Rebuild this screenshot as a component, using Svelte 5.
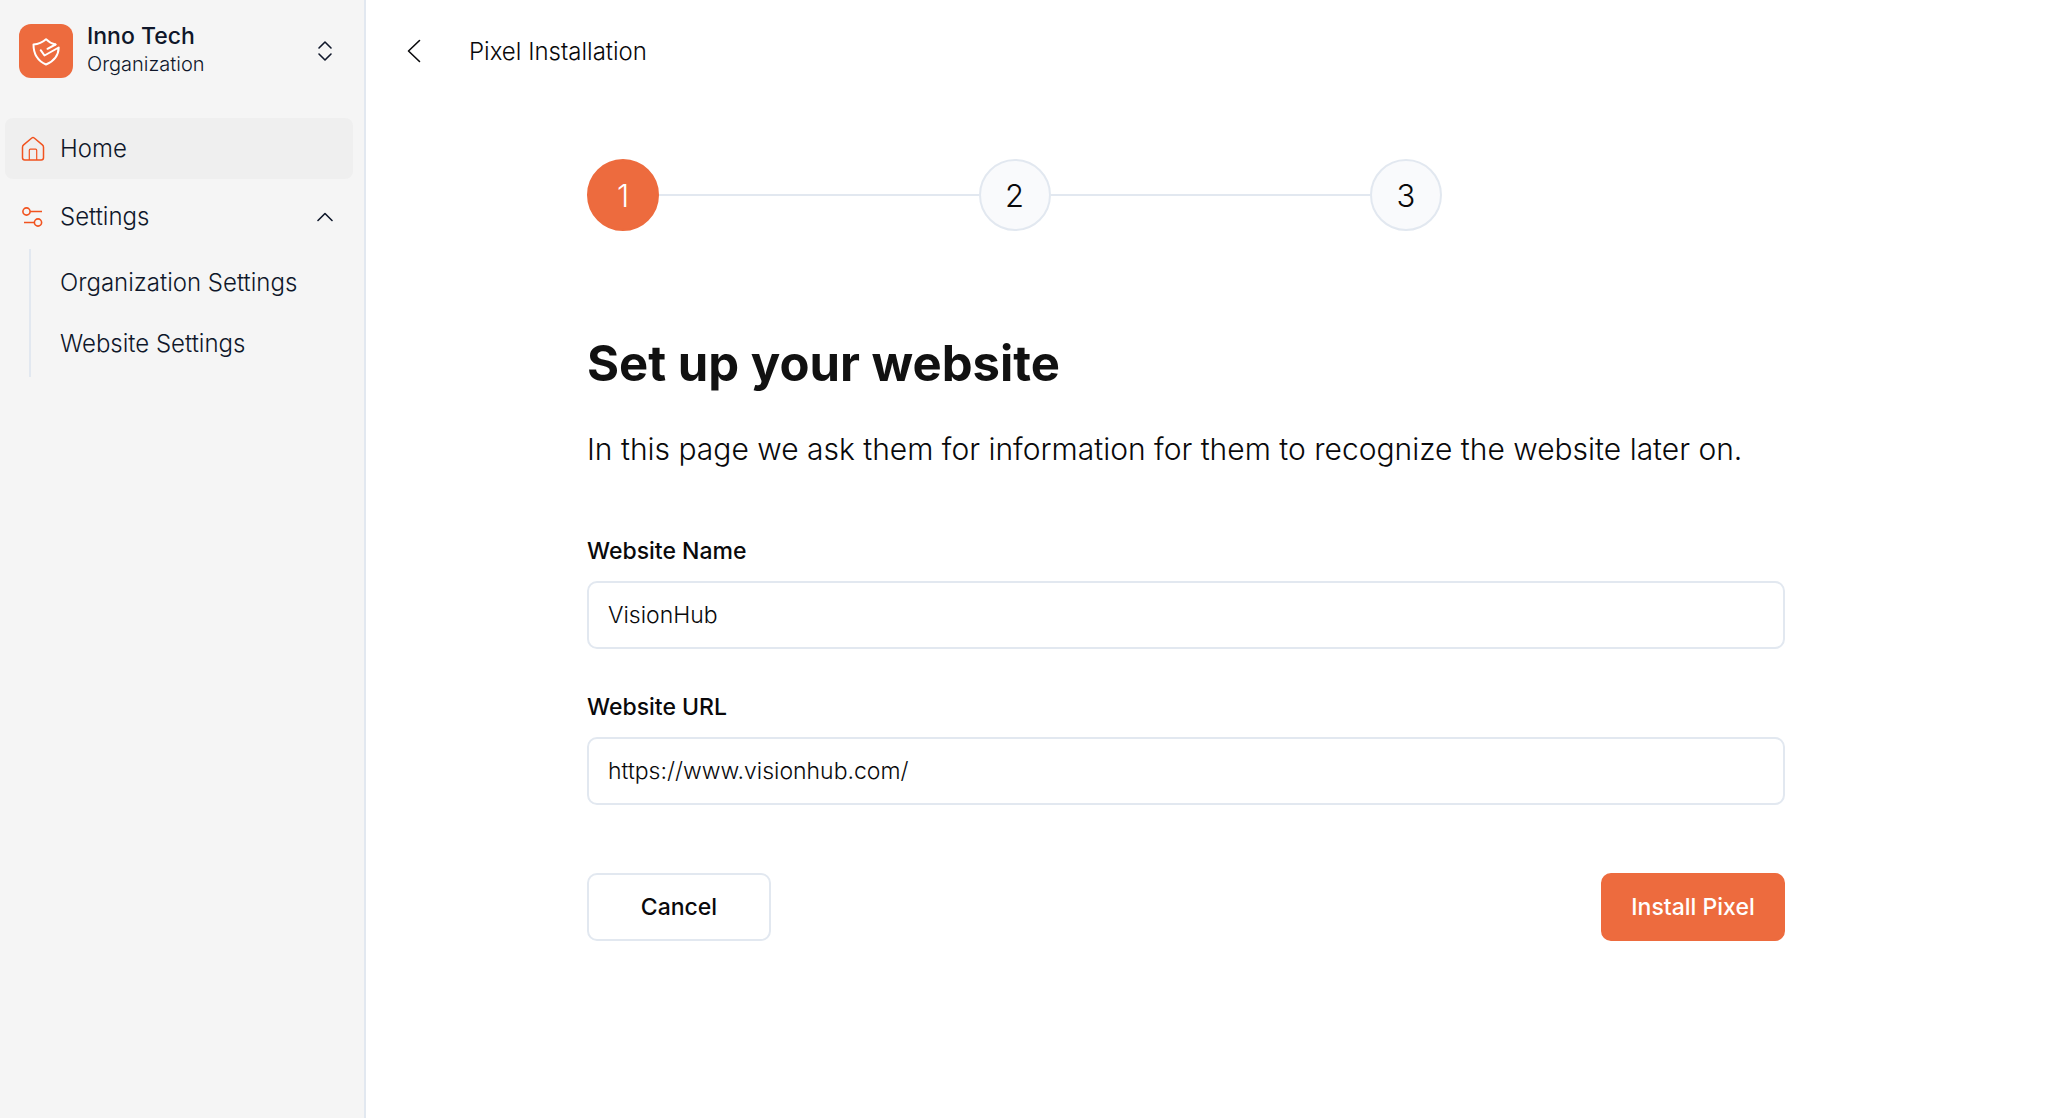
<script>
  let websiteName = 'VisionHub';
  let websiteUrl = 'https://www.visionhub.com/';
  let settingsOpen = true;
  let currentStep = 1;

  const steps = [1, 2, 3];

  const settingsLinks = [
    { label: 'Organization Settings', href: '#organization' },
    { label: 'Website Settings', href: '#website' }
  ];

  function toggleSettings() {
    settingsOpen = !settingsOpen;
  }

  function installPixel() {
    if (currentStep < steps.length) {
      currentStep += 1;
    }
  }

  function cancel() {
    currentStep = 1;
  }
</script>

<div class="layout">
  <aside class="sidebar">
    <button type="button" class="org">
      <span class="logo">
        <svg width="30" height="30" viewBox="0 0 30 30" fill="none" stroke="currentColor" stroke-width="2" stroke-linecap="round" stroke-linejoin="round">
          <path d="M24.5 8.5 C20.5 7.5 17.5 6 15 3.2 C11.8 6 7.5 8 2.5 8.5 C2.5 18 6 24.5 15 28.5 C23.5 25 27.5 19.5 27.7 11.5 L13.5 19.5 L9.7 14.2" />
          <path d="M24.5 8.5 L16.5 12.8" />
        </svg>
      </span>
      <span class="org-text">
        <span class="org-name">Inno Tech</span>
        <span class="org-type">Organization</span>
      </span>
      <svg class="end-icon" width="16" height="22" viewBox="0 0 16 22" fill="none" stroke="currentColor" stroke-width="1.6" stroke-linecap="round" stroke-linejoin="round">
        <path d="M2 8 L8 2 L14 8 M2 14 L8 20 L14 14" />
      </svg>
    </button>

    <nav class="nav">
      <a href="#home" class="nav-item active">
        <svg class="nav-icon" width="24" height="26" viewBox="0 0 24 26" fill="none" stroke="currentColor" stroke-width="1.5" stroke-linejoin="round">
          <path d="M1.5 11.2 Q1.5 9.8 2.6 8.9 L10.8 2 Q12 1.1 13.2 2 L21.4 8.9 Q22.5 9.8 22.5 11.2 V21.8 Q22.5 24 20.3 24 H3.7 Q1.5 24 1.5 21.8 Z" />
          <path d="M8.3 24 V14.2 Q8.3 13.2 9.3 13.2 H14.7 Q15.7 13.2 15.7 14.2 V24" stroke-width="1.2" />
        </svg>
        Home
      </a>

      <button type="button" class="nav-item" aria-expanded={settingsOpen} on:click={toggleSettings}>
        <svg class="nav-icon" width="24" height="22" viewBox="0 0 24 22" fill="none" stroke="currentColor" stroke-width="1.6">
          <circle cx="5.5" cy="5.5" r="3.6" />
          <path d="M9.1 5.5 H21 M3 16.5 H13.4" />
          <circle cx="17" cy="16.5" r="3.6" />
        </svg>
        Settings
        <svg class="end-icon" class:closed={!settingsOpen} width="16" height="10" viewBox="0 0 16 10" fill="none" stroke="currentColor" stroke-width="1.6" stroke-linecap="round" stroke-linejoin="round">
          <path d="M1 8.5 L8 1.5 L15 8.5" />
        </svg>
      </button>

      {#if settingsOpen}
        <div class="subnav">
          {#each settingsLinks as link}
            <a href={link.href}>{link.label}</a>
          {/each}
        </div>
      {/if}
    </nav>
  </aside>

  <main class="main">
    <header class="topbar">
      <button type="button" class="back" aria-label="Back">
        <svg width="14" height="24" viewBox="0 0 14 24" fill="none" stroke="currentColor" stroke-width="1.6" stroke-linecap="round" stroke-linejoin="round">
          <path d="M12.5 1.5 L1.5 12 L12.5 22.5" />
        </svg>
      </button>
      <span>Pixel Installation</span>
    </header>

    <div class="content">
      <div class="steps">
        {#each steps as step, i}
          {#if i > 0}
            <span class="line"></span>
          {/if}
          <span class="step" class:current={step === currentStep}>{step}</span>
        {/each}
      </div>

      <h1>Set up your website</h1>
      <p>In this page we ask them for information for them to recognize the website later on.</p>

      <form on:submit|preventDefault={installPixel}>
        <div class="form-group">
          <label for="websiteName">Website Name</label>
          <input type="text" id="websiteName" bind:value={websiteName} />
        </div>

        <div class="form-group">
          <label for="websiteUrl">Website URL</label>
          <input type="text" id="websiteUrl" bind:value={websiteUrl} />
        </div>

        <div class="button-group">
          <button type="button" class="btn" on:click={cancel}>Cancel</button>
          <button type="submit" class="btn primary">Install Pixel</button>
        </div>
      </form>
    </div>
  </main>
</div>

<style>
  :global(body) {
    background: #fff;
    font-family: Inter, 'Liberation Sans', sans-serif;
    font-size: 24px;
    font-weight: 300;
    color: #09090b;
  }

  * {
    box-sizing: border-box;
  }

  button,
  input {
    font: inherit;
    color: inherit;
  }

  button {
    border: 0;
    background: none;
    cursor: pointer;
  }

  a {
    color: inherit;
    text-decoration: none;
  }

  svg {
    flex: none;
  }

  .layout {
    display: flex;
    min-height: 100vh;
  }

  .sidebar {
    flex: none;
    width: 366px;
    background: #f5f5f5;
    border-right: 2px solid #e2e8f0;
    color: #0f172a;
  }

  .org {
    display: flex;
    align-items: center;
    width: 100%;
    height: 101px;
    padding: 0 31px 0 19px;
    text-align: left;
  }

  .logo {
    display: flex;
    align-items: center;
    justify-content: center;
    width: 54px;
    height: 54px;
    margin-right: 14px;
    border-radius: 12px;
    background: #ed6b3e;
    color: #fff;
  }

  .org-text {
    display: flex;
    flex-direction: column;
    padding-bottom: 2px;
  }

  .org-name {
    font-size: 23px;
    font-weight: 500;
    line-height: 28px;
  }

  .org-type {
    font-size: 20px;
    line-height: 28px;
  }

  .end-icon {
    margin-left: auto;
  }

  .end-icon.closed {
    transform: rotate(180deg);
  }

  .nav {
    padding: 17px 11px 0 5px;
  }

  .nav-item {
    display: flex;
    align-items: center;
    width: 100%;
    height: 61px;
    margin-bottom: 7px;
    padding: 0 20px 0 16px;
    border-radius: 8px;
  }

  .nav-item.active {
    background: #efefef;
  }

  .nav-icon {
    margin-right: 15px;
    color: #f1531f;
  }

  .subnav {
    margin: -5px 0 0 24px;
    padding: 3px 0;
    border-left: 2px solid #e2e8f0;
  }

  .subnav a {
    display: block;
    padding-left: 29px;
    line-height: 61px;
  }

  .main {
    flex: 1;
    min-width: 0;
  }

  .topbar {
    display: flex;
    align-items: center;
    height: 102px;
    padding-left: 41px;
  }

  .back {
    display: flex;
    margin-right: 48px;
    padding: 0;
  }

  .content {
    padding: 57px 269px 57px 221px;
  }

  .steps {
    display: flex;
    align-items: center;
    max-width: 855px;
  }

  .step {
    display: flex;
    align-items: center;
    justify-content: center;
    width: 72px;
    height: 72px;
    border: 2px solid #e2e8f0;
    border-radius: 50%;
    background: #f9fafc;
    font-size: 31px;
  }

  .step.current {
    border-color: #ed6b3e;
    background: #ed6b3e;
    color: #fff;
  }

  .line {
    flex: 1;
    height: 2px;
    background: #e2e8f0;
  }

  h1 {
    margin: 101px 0 33px;
    font-size: 49px;
    font-weight: 700;
    line-height: 64px;
    color: #111;
  }

  p {
    margin: 0 0 66px;
    font-size: 30px;
    line-height: 40px;
  }

  .form-group {
    margin-bottom: 42px;
  }

  label {
    display: block;
    margin-bottom: 14px;
    font-size: 23px;
    font-weight: 500;
    line-height: 32px;
  }

  input {
    display: block;
    width: 100%;
    height: 68px;
    padding: 0 19px;
    border: 2px solid #e2e8f0;
    border-radius: 10px;
    background: #fff;
    font-size: 23px;
  }

  .button-group {
    display: flex;
    justify-content: space-between;
    padding-top: 26px;
  }

  .btn {
    width: 184px;
    height: 68px;
    padding: 0;
    border: 2px solid #e2e8f0;
    border-radius: 10px;
    background: #fff;
    font-size: 23px;
    font-weight: 500;
  }

  .btn.primary {
    border-color: #ed6b3e;
    background: #ed6b3e;
    color: #fff;
  }
</style>
